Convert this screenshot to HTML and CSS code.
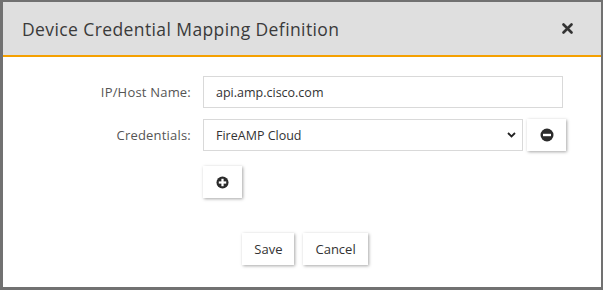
FILE: index.html
```html
<!DOCTYPE html>
<html>

<head>
    <meta name="viewport" content="width=device-width, initial-scale=1">
    <link rel="stylesheet" href="styles.css">
</head>

<body>
    <div id="dialog">
        <div class="dialog-header">
            <h1 class="dialog-title">Device Credential Mapping Definition</h1>
            <button class="close-btn" title="Close">
                <svg width="11" height="11" viewBox="0 0 11 11">
                    <path d="M1.5 1.5 L9.5 9.5 M9.5 1.5 L1.5 9.5" stroke="#333" stroke-width="2.6" stroke-linecap="round" />
                </svg>
            </button>
        </div>

        <div class="dialog-body">
            <div class="form-row">
                <label for="host" class="label">IP/Host Name:</label>
                <input class="input host-input" id="host" value="api.amp.cisco.com">
            </div>

            <div class="form-row">
                <label for="cred" class="label">Credentials:</label>
                <div class="select-wrap">
                    <select class="input cred-select" id="cred">
                        <option>FireAMP Cloud</option>
                    </select>
                    <svg class="chevron" width="9" height="6" viewBox="0 0 9 6">
                        <path d="M1 1 L4.5 4.5 L8 1" fill="none" stroke="#222" stroke-width="1.8" />
                    </svg>
                </div>
                <button class="icon-btn" title="Remove">
                    <svg width="14" height="14" viewBox="0 0 14 14">
                        <circle cx="7" cy="7" r="6.5" fill="#2b2b2b" />
                        <rect x="3" y="5.8" width="8" height="2.4" fill="#fff" />
                    </svg>
                </button>
            </div>

            <div class="form-row add-row">
                <span class="label"></span>
                <button class="icon-btn" title="Add">
                    <svg width="13" height="13" viewBox="0 0 14 14">
                        <circle cx="7" cy="7" r="6.5" fill="#2b2b2b" />
                        <rect x="3" y="5.8" width="8" height="2.4" fill="#fff" />
                        <rect x="5.8" y="3" width="2.4" height="8" fill="#fff" />
                    </svg>
                </button>
            </div>

            <div class="actions">
                <button class="btn">Save</button>
                <button class="btn">Cancel</button>
            </div>
        </div>
    </div>
</body>

</html>
```

FILE: styles.css
```css
html,
body {
    margin: 0;
    height: 100%;
}

body {
    font-family: 'Open Sans', 'Liberation Sans', Arial, sans-serif;
    color: #333;
}

#dialog {
    box-sizing: border-box;
    height: 290px;
    border: solid #717171;
    border-width: 2px 2px 3px 3px;
    background-color: white;
}

.dialog-header {
    display: flex;
    align-items: center;
    justify-content: space-between;
    height: 53px;
    background-color: #dfdfdf;
    border-bottom: 2px solid #f5a000;
    padding: 0 28px 0 19px;
}

.dialog-title {
    margin: 0;
    font-family: 'Open Sans', sans-serif;
    font-weight: normal;
    font-size: 17.5px;
    letter-spacing: 0.4px;
    color: #3a3a3a;
}

.close-btn {
    border: none;
    background: none;
    padding: 0;
    display: flex;
    cursor: pointer;
}

.dialog-body {
    padding-top: 19px;
}

.form-row {
    display: flex;
    align-items: center;
    gap: 4px;
    margin-bottom: 11px;
}

.add-row {
    margin-top: 15px;
}

.label {
    width: 188px;
    margin-right: 8px;
    text-align: right;
    font-size: 13px;
    color: #555;
    letter-spacing: 0.2px;
}

.input {
    box-sizing: border-box;
    height: 32px;
    border: 1px solid #d9d9d9;
    border-radius: 0;
    padding: 0 12px;
    font-family: inherit;
    font-size: 12.5px;
    color: #333;
    background-color: white;
    outline: none;
}

.host-input {
    width: 360px;
}

.select-wrap {
    position: relative;
    display: flex;
}

.cred-select {
    width: 320px;
    -webkit-appearance: none;
    appearance: none;
}

.chevron {
    position: absolute;
    right: 7px;
    top: 13px;
    pointer-events: none;
}

.icon-btn {
    box-sizing: border-box;
    width: 39px;
    height: 32px;
    border: none;
    background-color: white;
    box-shadow: 1px 1px 3px rgba(0, 0, 0, 0.35);
    display: flex;
    align-items: center;
    justify-content: center;
    padding: 0;
    cursor: pointer;
}

.actions {
    display: flex;
    justify-content: center;
    gap: 9px;
    margin-top: 35px;
    padding-left: 6px;
}

.btn {
    height: 32px;
    padding: 0 12px;
    border: none;
    background-color: white;
    box-shadow: 1px 1px 3px rgba(0, 0, 0, 0.35);
    font-family: inherit;
    font-size: 13px;
    color: #333;
    cursor: pointer;
}
```
